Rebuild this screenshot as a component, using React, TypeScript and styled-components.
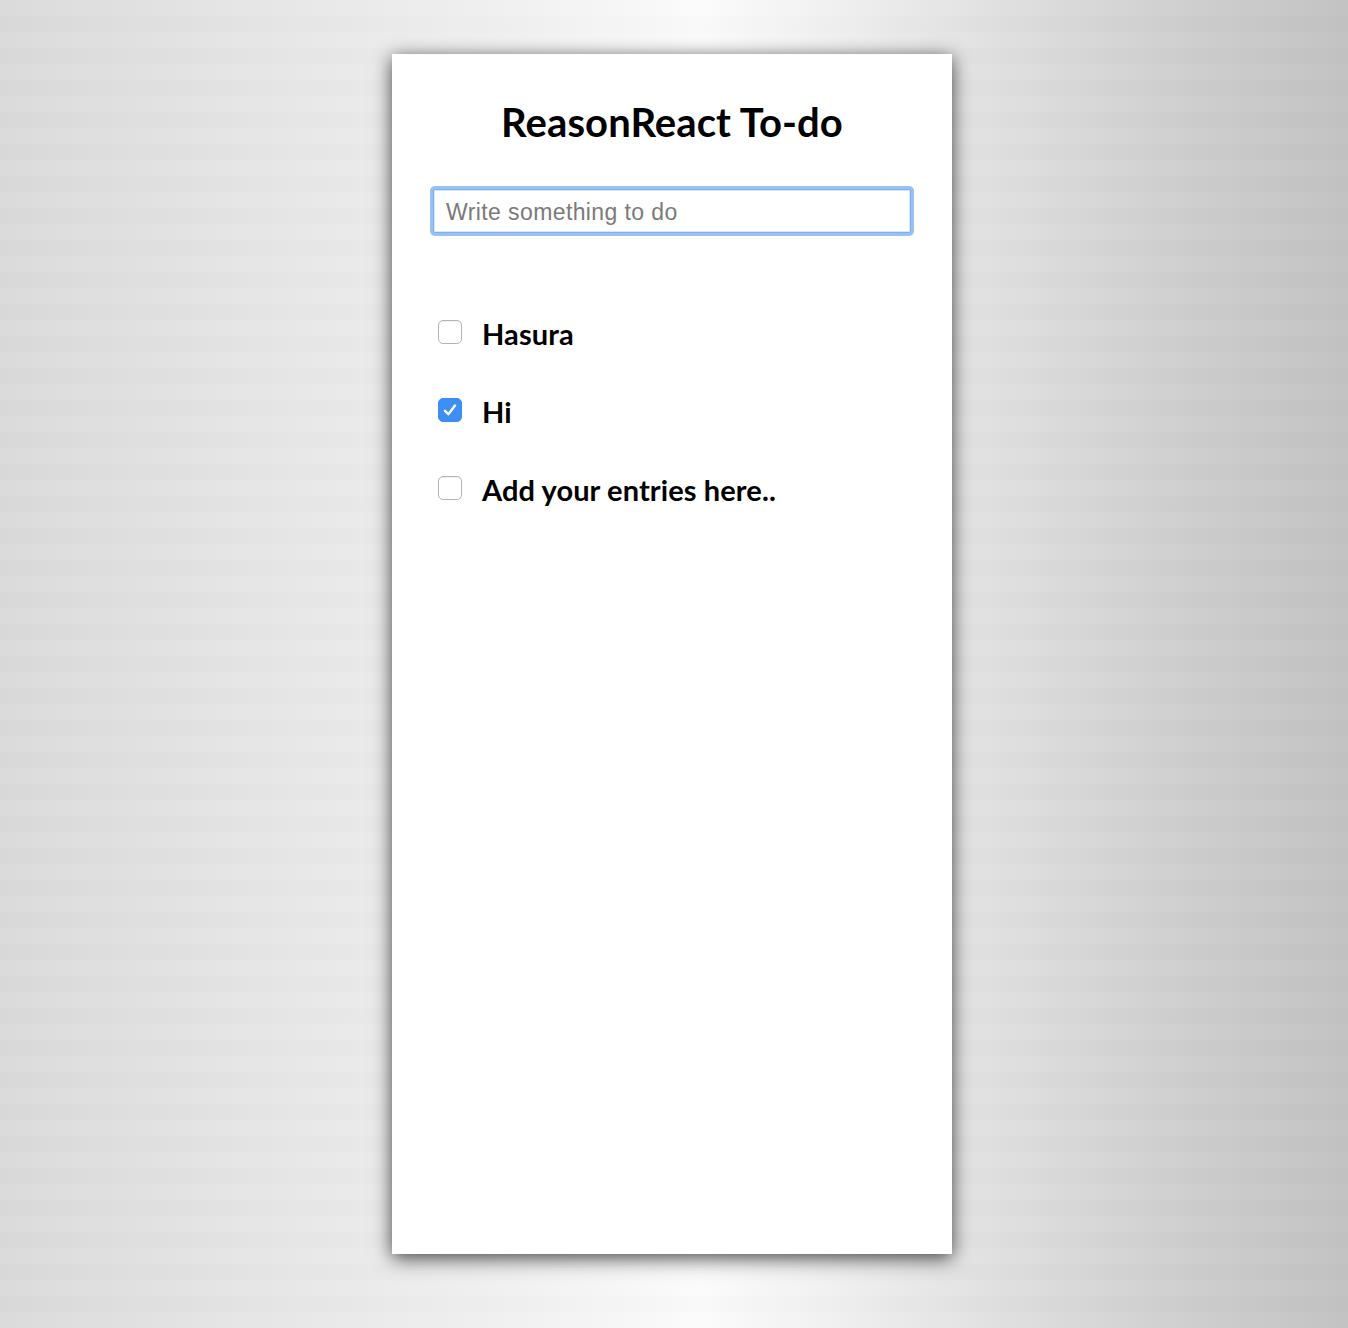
import React, { useState } from 'react';
import styled, { createGlobalStyle } from 'styled-components';

const GlobalStyle = createGlobalStyle`
  html, body {
    margin: 0;
    padding: 0;
    min-height: 100%;
  }
  body {
    font-family: 'Lato', 'Open Sans', sans-serif;
    background-color: #e4e4e4;
    background-image:
      repeating-linear-gradient(180deg, rgba(255,255,255,0.025) 0px, rgba(255,255,255,0.025) 16px, rgba(0,0,0,0.008) 16px, rgba(0,0,0,0.008) 32px),
      linear-gradient(90deg, #dadada 0%, #e6e6e6 20%, #f2f2f2 40%, #fbfbfb 52%, #f0f0f0 62%, #dedede 75%, #cfcfcf 87%, #c2c2c2 100%);
  }
`;

const Page = styled.div`
  min-height: 1328px;
  display: flex;
  justify-content: center;
  align-items: flex-start;
  padding: 54px 4px 0 0;
  box-sizing: border-box;
`;

const Card = styled.div`
  width: 560px;
  height: 1200px;
  background: #fff;
  box-shadow: 0 4px 18px rgba(0, 0, 0, 0.72);
  padding: 0 41px;
  box-sizing: border-box;
  display: flex;
  flex-direction: column;
`;

const Title = styled.h1`
  margin: 45px 0 0;
  font-family: 'Lato', sans-serif;
  font-weight: 700;
  font-size: 40px;
  line-height: 46px;
  color: #000;
  text-align: center;
  letter-spacing: 0.1px;
`;

const Input = styled.input`
  margin-top: 44px;
  width: 100%;
  height: 44px;
  box-sizing: border-box;
  border: 1px solid #7eaff0;
  border-radius: 2px;
  box-shadow: 0 0 0 3px rgba(120, 172, 240, 0.75), inset 0 0 0 1px rgba(140, 185, 240, 0.35);
  padding: 2px 12px 0;
  font-family: 'Liberation Sans', Arial, sans-serif;
  font-size: 23px;
  letter-spacing: 0.4px;
  color: #222;
  caret-color: #000;
  outline: none;

  &::placeholder {
    color: #7a7a7a;
  }
`;

const List = styled.ul`
  list-style: none;
  margin: 84px 0 0;
  padding: 0 0 0 5px;
  display: flex;
  flex-direction: column;
  gap: 46px;
`;

const Row = styled.li`
  display: flex;
  align-items: center;
  gap: 20px;
  height: 32px;
  cursor: pointer;
`;

const Box = styled.span<{ checked: boolean }>`
  width: 24px;
  height: 24px;
  box-sizing: border-box;
  border-radius: 5px;
  border: 1px solid ${({ checked }) => (checked ? '#3a8df2' : '#b3b3b3')};
  background: ${({ checked }) => (checked ? '#3d8ff3' : '#fff')};
  box-shadow: ${({ checked }) => (checked ? 'none' : 'inset 0 1px 1px rgba(0,0,0,0.06)')};
  display: flex;
  align-items: center;
  justify-content: center;
  flex-shrink: 0;
  margin-bottom: 3px;
`;

const Label = styled.span`
  font-family: 'Lato', sans-serif;
  font-weight: 700;
  font-size: 29px;
  color: #000;
  letter-spacing: 0.1px;
`;

type Todo = { text: string; done: boolean };

function App() {
  const [todos, setTodos] = useState<Todo[]>([
    { text: 'Hasura', done: false },
    { text: 'Hi', done: true },
    { text: 'Add your entries here..', done: false },
  ]);

  const toggle = (i: number) => {
    setTodos(todos.map((t, j) => (j === i ? { ...t, done: !t.done } : t)));
  };

  return (
    <>
      <GlobalStyle />
      <Page>
        <Card>
          <Title>ReasonReact To-do</Title>
          <Input placeholder="Write something to do" autoFocus />
          <List>
            {todos.map((t, i) => (
              <Row key={i} onClick={() => toggle(i)}>
                <Box checked={t.done}>
                  {t.done && (
                    <svg width="18" height="18" viewBox="0 0 18 18">
                      <path d="M4 9.8 L7.4 13.2 L14 4.6" fill="none" stroke="#fff" strokeWidth="2.4" strokeLinecap="round" strokeLinejoin="round" />
                    </svg>
                  )}
                </Box>
                <Label>{t.text}</Label>
              </Row>
            ))}
          </List>
        </Card>
      </Page>
    </>
  );
}

export default App;
